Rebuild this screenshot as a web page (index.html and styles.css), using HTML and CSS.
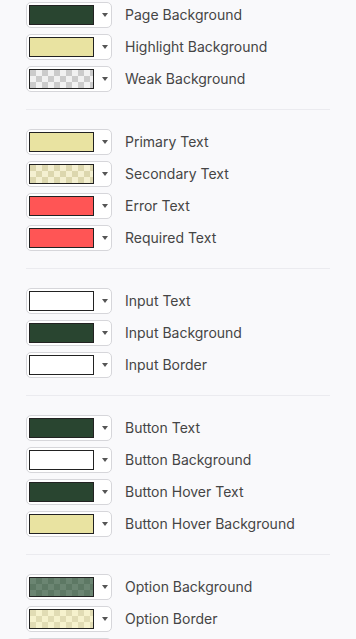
FILE: index.html
```html
<!DOCTYPE html>
<html lang="en">
<head>
  <meta charset="UTF-8">
  <title>Colours</title>
  <link rel="stylesheet" href="styles.css">
</head>
<body>
  <div id="settings">
    <div class="group">
      <div class="row"><div class="picker"><span class="swatch green"></span><span class="arrow"></span></div><span class="label">Page Background</span></div>
      <div class="row"><div class="picker"><span class="swatch yellow"></span><span class="arrow"></span></div><span class="label">Highlight Background</span></div>
      <div class="row"><div class="picker"><span class="swatch check-grey"></span><span class="arrow"></span></div><span class="label">Weak Background</span></div>
    </div>
    <hr>
    <div class="group">
      <div class="row"><div class="picker"><span class="swatch yellow"></span><span class="arrow"></span></div><span class="label">Primary Text</span></div>
      <div class="row"><div class="picker"><span class="swatch check-yellow"></span><span class="arrow"></span></div><span class="label">Secondary Text</span></div>
      <div class="row"><div class="picker"><span class="swatch red"></span><span class="arrow"></span></div><span class="label">Error Text</span></div>
      <div class="row"><div class="picker"><span class="swatch red"></span><span class="arrow"></span></div><span class="label">Required Text</span></div>
    </div>
    <hr>
    <div class="group">
      <div class="row"><div class="picker"><span class="swatch white"></span><span class="arrow"></span></div><span class="label">Input Text</span></div>
      <div class="row"><div class="picker"><span class="swatch green"></span><span class="arrow"></span></div><span class="label">Input Background</span></div>
      <div class="row"><div class="picker"><span class="swatch white"></span><span class="arrow"></span></div><span class="label">Input Border</span></div>
    </div>
    <hr>
    <div class="group">
      <div class="row"><div class="picker"><span class="swatch green"></span><span class="arrow"></span></div><span class="label">Button Text</span></div>
      <div class="row"><div class="picker"><span class="swatch white"></span><span class="arrow"></span></div><span class="label">Button Background</span></div>
      <div class="row"><div class="picker"><span class="swatch green"></span><span class="arrow"></span></div><span class="label">Button Hover Text</span></div>
      <div class="row"><div class="picker"><span class="swatch yellow"></span><span class="arrow"></span></div><span class="label">Button Hover Background</span></div>
    </div>
    <hr>
    <div class="group">
      <div class="row"><div class="picker"><span class="swatch check-green"></span><span class="arrow"></span></div><span class="label">Option Background</span></div>
      <div class="row"><div class="picker"><span class="swatch check-cream"></span><span class="arrow"></span></div><span class="label">Option Border</span></div>
      <div class="row"><div class="picker"><span class="swatch white"></span><span class="arrow"></span></div></div>
    </div>
  </div>
</body>
</html>
```

FILE: styles.css
```css
body {
  margin: 0;
  padding: 2px 26px 0 26px;
  background-color: #f9f9fb;
  font-family: Inter, "Liberation Sans", sans-serif;
  color: #454545;
  height: 639px;
  overflow: hidden;
}
.group {
  display: flex;
  flex-direction: column;
  gap: 6px;
}
hr {
  border: 0;
  border-top: 1px solid #ebebef;
  margin: 17px 0 19px 0;
}
.row {
  display: flex;
  align-items: center;
  height: 26px;
}
.picker {
  display: flex;
  align-items: center;
  box-sizing: border-box;
  width: 86px;
  height: 26px;
  padding-left: 2px;
  border: 1px solid #d6d6da;
  border-radius: 5px;
  background-color: #fff;
}
.swatch {
  display: block;
  box-sizing: border-box;
  width: 65px;
  height: 20px;
  border: 1px solid #222;
}
.arrow {
  display: block;
  width: 0;
  height: 0;
  margin-left: 8px;
  border-left: 3px solid transparent;
  border-right: 3px solid transparent;
  border-top: 4px solid #555;
}
.label {
  margin-left: 13px;
  padding-bottom: 1px;
  font-size: 14px;
  line-height: 16px;
}
.green { background-color: #294530; }
.yellow { background-color: #e9e3a1; }
.red { background-color: #ff5555; }
.white { background-color: #fff; }
.check-grey {
  background: repeating-conic-gradient(#f1f1f1 0 25%, #cbcbcb 0 50%) 0 0 / 12px 12px;
}
.check-yellow {
  background: repeating-conic-gradient(#f4f0d1 0 25%, #dcd7ae 0 50%) 0 0 / 12px 12px;
}
.check-green {
  background: repeating-conic-gradient(#5d7864 0 25%, #6b8572 0 50%) 0 0 / 12px 12px;
}
.check-cream {
  background: repeating-conic-gradient(#f6f2cd 0 25%, #e1dcb4 0 50%) 0 0 / 12px 12px;
}
```
